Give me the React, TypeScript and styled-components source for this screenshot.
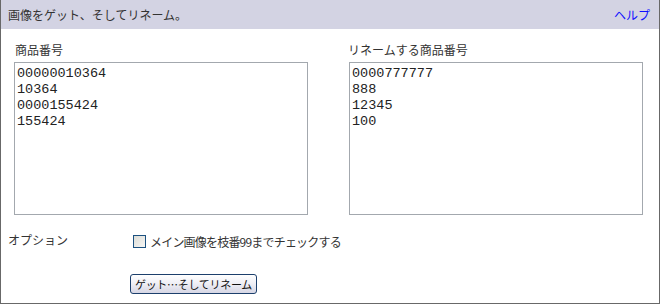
import styled, { createGlobalStyle } from "styled-components";

const GlobalStyle = createGlobalStyle`
  html, body {
    margin: 0;
    padding: 0;
    background: #fff;
  }
  body {
    font-family: "Noto Sans CJK JP", "Liberation Sans", sans-serif;
    font-size: 12px;
    color: #222;
  }
`;

const skuList = ["00000010364", "10364", "0000155424", "155424"];
const renameList = ["0000777777", "888", "12345", "100"];

export default function App() {
  return (
    <>
      <GlobalStyle />
      <Panel>
        <Header>
          <h1>画像をゲット、そしてリネーム。</h1>
          <HelpLink href="#">ヘルプ</HelpLink>
        </Header>
        <Columns>
          <Field>
            <label>商品番号</label>
            <Box defaultValue={skuList.join("\n")} spellCheck={false} />
          </Field>
          <Field>
            <label>リネームする商品番号</label>
            <Box defaultValue={renameList.join("\n")} spellCheck={false} />
          </Field>
        </Columns>
        <Options>
          <OptionLabel>オプション</OptionLabel>
          <OptionBody>
            <CheckRow>
              <input type="checkbox" />
              <span>メイン画像を枝番99までチェックする</span>
            </CheckRow>
            <SubmitButton>ゲット…そしてリネーム</SubmitButton>
          </OptionBody>
        </Options>
      </Panel>
    </>
  );
}

const Panel = styled.div`
  width: 660px;
  height: 304px;
  box-sizing: border-box;
  border: 1px solid #686868;
  border-top: none;
  display: flex;
  flex-direction: column;
`;

const Header = styled.div`
  height: 28px;
  background: #d3d3e3;
  display: flex;
  align-items: center;
  justify-content: space-between;
  padding: 0 9px 1px 7px;
  h1 {
    margin: 0;
    font-size: 12px;
    font-weight: 400;
    color: #333;
  }
`;

const HelpLink = styled.a`
  color: #1010ff;
  text-decoration: none;
  font-size: 12px;
`;

const Columns = styled.div`
  display: grid;
  grid-template-columns: 294px 294px;
  column-gap: 41px;
  padding: 12px 0 0 13px;
`;

const Field = styled.div`
  display: flex;
  flex-direction: column;
  gap: 3px;
  label {
    padding-left: 1px;
    font-size: 12px;
    line-height: 18px;
    color: #333;
  }
  &:last-child label {
    margin-left: -2px;
  }
`;

const Box = styled.textarea`
  box-sizing: border-box;
  width: 294px;
  height: 153px;
  margin: 0;
  border: 1px solid #a3a8ae;
  padding: 3px 2px;
  resize: none;
  outline: none;
  font-family: "Liberation Mono", monospace;
  font-size: 13.5px;
  line-height: 16px;
  color: #222;
  overflow: hidden;
`;

const Options = styled.div`
  display: grid;
  grid-template-columns: 122px 1fr;
  padding: 17px 0 0 7px;
`;

const OptionLabel = styled.div`
  font-size: 12px;
  line-height: 16px;
  color: #333;
`;

const OptionBody = styled.div`
  display: flex;
  flex-direction: column;
  align-items: flex-start;
  gap: 24px;
`;

const CheckRow = styled.label`
  display: flex;
  align-items: center;
  gap: 4px;
  padding-left: 3px;
  margin-top: 1px;
  font-size: 12px;
  letter-spacing: -0.8px;
  color: #333;
  white-space: nowrap;
  input {
    appearance: none;
    margin: 0;
    width: 13px;
    height: 13px;
    box-sizing: border-box;
    border: 1px solid #1c5180;
    background: linear-gradient(135deg, #dcdcd6, #f6f6f4);
  }
`;

const SubmitButton = styled.button`
  width: 127px;
  height: 20px;
  box-sizing: border-box;
  padding: 0;
  border: 1px solid #1c3f6c;
  border-radius: 3px;
  background: linear-gradient(#ffffff, #f0f0f6 45%, #d6d6e4);
  font-family: "Noto Sans CJK JP", sans-serif;
  font-size: 11px;
  letter-spacing: -0.3px;
  line-height: 16px;
  white-space: nowrap;
  color: #111;
`;
